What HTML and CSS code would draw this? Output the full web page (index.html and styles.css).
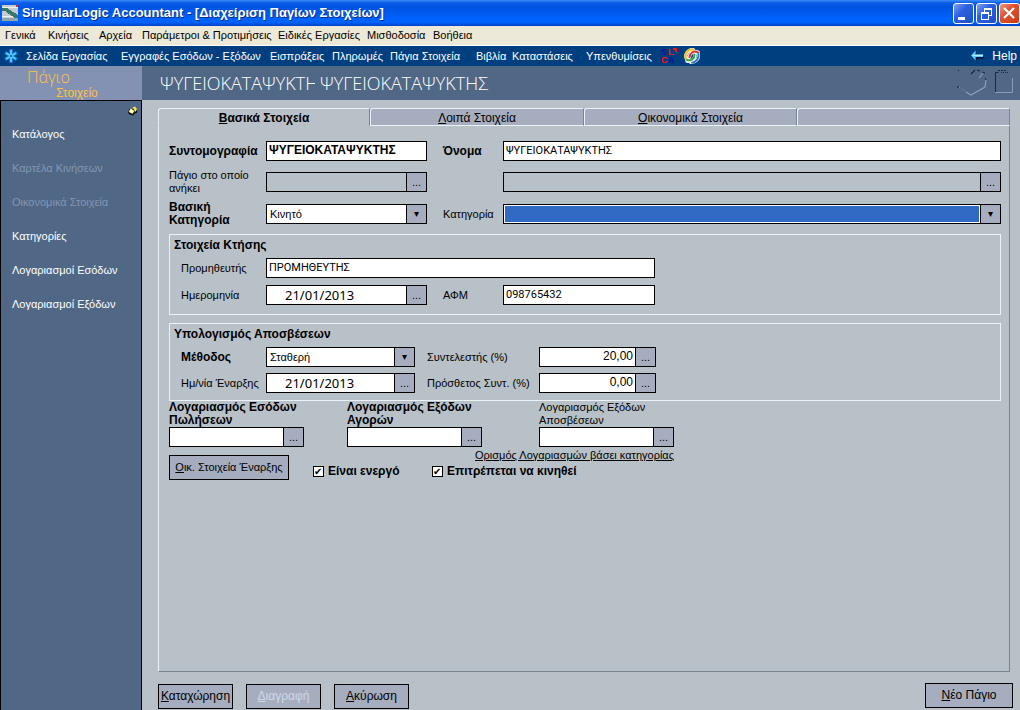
FILE: index.html
```html
<!DOCTYPE html>
<html lang="el">
<head>
<meta charset="utf-8">
<title>SingularLogic Accountant</title>
<link rel="stylesheet" href="styles.css">
</head>
<body>
<header class="titlebar">
  <svg class="app-icon" viewBox="0 0 16 16" shape-rendering="crispEdges">
    <rect width="16" height="16" fill="#c4ccd0"/>
    <path d="M0 3H5L16 10V15H15L3 6H0z" fill="#38776d"/>
    <path d="M0 2.500H16M0 11.500H11" stroke="#eef0f2"/><path d="M0 14H16" stroke="#90a4ac" stroke-width="3"/>
    <rect x="14" y="0" width="2" height="2" fill="#e03020"/>
  </svg>
  <h1 class="app-title">SingularLogic Accountant - [Διαχείριση Παγίων Στοιχείων]</h1>
  <div class="window-buttons">
    <button class="win" type="button" aria-label="Ελαχιστοποίηση"><svg viewBox="0 0 19 19"><path d="M4 14.500h7" stroke="#fff" stroke-width="3"/></svg></button>
    <button class="win" type="button" aria-label="Επαναφορά"><svg viewBox="0 0 19 19" shape-rendering="crispEdges" fill="#fff"><path d="M7 4h8v8h-3v-1h2V6H8v2H7zM4 8h8v8H4zM5 10v5h6v-5z" fill-rule="evenodd"/></svg></button>
    <button class="win close" type="button" aria-label="Κλείσιμο"><svg viewBox="0 0 19 19"><path d="M4 4l10 10M14 4L4 14" stroke="#fff" stroke-width="2.200"/></svg></button>
  </div>
</header>
<nav class="menubar">
  <a href="#">Γενικά</a><a href="#">Κινήσεις</a><a href="#">Αρχεία</a><a href="#">Παράμετροι &amp; Προτιμήσεις</a><a href="#">Ειδικές Εργασίες</a><a href="#">Μισθοδοσία</a><a href="#">Βοήθεια</a>
</nav>
<nav class="toolbar">
  <svg class="star" viewBox="0 0 16 16"><path d="M8 1v14M2 4.500l12 7M14 4.500l-12 7" stroke="#0c78d8" stroke-width="3.600"/><path d="M8 2v12M3 5l10 6M13 5L3 11" stroke="#58c8ff" stroke-width="2"/><circle cx="8" cy="8" r="1" fill="#003c78"/></svg>
  <div class="toolbar-links">
    <a href="#">Σελίδα Εργασίας</a><a href="#">Εγγραφές Εσόδων - Εξόδων</a><a href="#">Εισπράξεις</a><a href="#">Πληρωμές</a><a href="#">Πάγια Στοιχεία</a><a href="#">Βιβλία</a><a href="#">Καταστάσεις</a><a href="#">Υπενθυμίσεις</a>
  </div>
  <svg class="tool-icon slca" viewBox="0 0 16 16">
    <text x="0" y="7" fill="#1010a0">S<tspan x="7" fill="#ff1010">L</tspan></text>
    <text x="0" y="15" fill="#ff1010">C<tspan x="7" fill="#1010a0">A</tspan></text>
    <path d="M12 0h4v4h-1L12 1z" fill="#ff1010"/>
  </svg>
  <svg class="tool-icon swirl" viewBox="0 0 16 16" fill="none" stroke-linecap="round">
    <path d="M9 1.500C3 2 0 7 3 12M14 4C9 2 6 5 5 10M14.500 6C15 11 12 14 7 14.500M3 13c5 1 8-2 8-7" stroke="#f4f8ff" stroke-width="3.400"/>
    <path d="M9 1.300C3 1.500 0 7 2.500 11" stroke="#f4c400" stroke-width="2"/>
    <path d="M14 4.300C9 2 6.500 5 5.500 9" stroke="#e03028" stroke-width="2"/>
    <path d="M14.500 6C15 11 12 14 8 14.700" stroke="#2878c8" stroke-width="2"/>
    <path d="M3 12c5 1.500 7.500-2 7.500-5.500" stroke="#38a838" stroke-width="2"/>
  </svg>
  <a class="help" href="#"><svg viewBox="0 0 16 12"><path d="M7 2v3h8v4H7v3L1 6.500z" fill="#001838"/><path d="M6 0v4h8v3H6v4L1 5.500z" fill="#58c8ff"/><path d="M3 5.500h11" stroke="#c8f0ff"/></svg>Help</a>
</nav>
<div class="heading">
  <div class="section-name"><span class="section-main">Πάγιο</span><span class="section-sub">Στοιχείο</span></div>
  <h2 class="record-name"><span class="record-code">ΨΥΓΕΙΟΚΑΤΑΨΥΚΤΗΣ</span><span>ΨΥΓΕΙΟΚΑΤΑΨΥΚΤΗΣ</span></h2>
  <svg class="heading-icons" viewBox="0 0 58 28" fill="none">
    <path d="M14 5l4-4M1 17v2M20 1l3 1M25 3l3 1" stroke="#14284c" stroke-width="1.200"/>
    <path d="M1 1.500h1M28 9l1 2" stroke="#14284c"/><path d="M26 4l-4 5M29 11l-1 7-14 8-5-3" stroke="#8c9cb8" stroke-width="1.200"/><path d="M8 22l-6-4" stroke="#8c9cb8" stroke-dasharray="1 2"/>
    <path d="M38.500 23V3.500h3" stroke="#14284c"/><path d="M41 1.500h8" stroke="#14284c" stroke-dasharray="2 1"/><path d="M44 3.500h8" stroke="#14284c" stroke-dasharray="1 1"/>
    <path d="M38 23.500h17.500V9" stroke="#8c9cb8"/>
  </svg>
</div>
<div class="workspace">
  <aside class="sidebar">
    <svg class="pin" viewBox="0 0 12 12"><path d="M1 8l2-5 3 1 2-3 3 3v4L8 9l-1 2-4-1z" fill="#111"/><path d="M2 7l2-4 4 3-2 3z" fill="#ffffb8"/><path d="M6 2l3-1 2 3-2 3z" fill="#f0e050"/></svg>
    <a href="#">Κατάλογος</a>
    <a class="off" aria-disabled="true">Καρτέλα Κινήσεων</a>
    <a class="off" aria-disabled="true">Οικονομικά Στοιχεία</a>
    <a href="#">Κατηγορίες</a>
    <a href="#">Λογαριασμοί Εσόδων</a>
    <a href="#">Λογαριασμοί Εξόδων</a>
  </aside>
  <main class="content">
    <div class="tabs" role="tablist">
      <button class="tab active" type="button" role="tab" aria-selected="true"><u>Β</u>ασικά Στοιχεία</button>
      <button class="tab" type="button" role="tab"><u>Λ</u>οιπά Στοιχεία</button>
      <button class="tab" type="button" role="tab"><u>Ο</u>ικονομικά Στοιχεία</button>
      <div class="tab-rest"></div>
    </div>
    <form class="panel">
      <div class="general">
        <label class="strong" for="abbr">Συντομογραφία</label>
        <input class="box strong" id="abbr" value="ΨΥΓΕΙΟΚΑΤΑΨΥΚΤΗΣ">
        <label class="second strong" for="name">Όνομα</label>
        <input class="box" id="name" value="ΨΥΓΕΙΟΚΑΤΑΨΥΚΤΗΣ">

        <label for="parent">Πάγιο στο οποίο<br>ανήκει</label>
        <div class="box combo readonly"><input id="parent" readonly><button class="more" type="button">...</button></div>
        <div class="box combo readonly parent-name"><input aria-label="Όνομα παγίου" readonly><button class="more" type="button">...</button></div>

        <label class="strong" for="base">Βασική<br>Κατηγορία</label>
        <div class="box combo drop"><select id="base"><option>Κινητό</option></select></div>
        <label class="second" for="category">Κατηγορία</label>
        <div class="box combo drop focused"><select id="category"><option></option></select></div>
      </div>

      <fieldset class="group">
        <legend>Στοιχεία Κτήσης</legend>
        <div class="acquisition">
          <label for="supplier">Προμηθευτής</label>
          <input class="box supplier" id="supplier" value="ΠΡΟΜΗΘΕΥΤΗΣ">
          <label for="bought">Ημερομηνία</label>
          <div class="box combo"><input class="date" id="bought" value="21/01/2013"><button class="more" type="button">...</button></div>
          <label class="second" for="afm">ΑΦΜ</label>
          <input class="box" id="afm" value="098765432">
        </div>
      </fieldset>

      <fieldset class="group">
        <legend>Υπολογισμός Αποσβέσεων</legend>
        <div class="depreciation">
          <label class="strong" for="method">Μέθοδος</label>
          <div class="box combo drop"><select id="method"><option>Σταθερή</option></select></div>
          <label class="third" for="rate">Συντελεστής (%)</label>
          <div class="box combo"><input class="number" id="rate" value="20,00"><button class="more" type="button">...</button></div>
          <label for="start">Ημ/νία Έναρξης</label>
          <div class="box combo"><input class="date" id="start" value="21/01/2013"><button class="more" type="button">...</button></div>
          <label class="third" for="extra">Πρόσθετος Συντ. (%)</label>
          <div class="box combo"><input class="number" id="extra" value="0,00"><button class="more" type="button">...</button></div>
        </div>
      </fieldset>

      <div class="accounts">
        <div class="account"><label class="strong" for="acc1">Λογαριασμός Εσόδων<br>Πωλήσεων</label>
          <div class="box combo"><input id="acc1"><button class="more" type="button">...</button></div></div>
        <div class="account"><label class="strong" for="acc2">Λογαριασμός Εξόδων<br>Αγορών</label>
          <div class="box combo"><input id="acc2"><button class="more" type="button">...</button></div></div>
        <div class="account"><label for="acc3">Λογαριασμός Εξόδων<br>Αποσβέσεων</label>
          <div class="box combo"><input id="acc3"><button class="more" type="button">...</button></div></div>
      </div>
      <div class="options">
        <button class="action opening" type="button"><u>Ο</u>ικ. Στοιχεία Έναρξης</button>
        <a class="define" href="#">Ορισμός Λογαριασμών βάσει κατηγορίας</a>
        <label class="check strong"><input type="checkbox" checked>Είναι ενεργό</label>
        <label class="check strong"><input type="checkbox" checked>Επιτρέπεται να κινηθεί</label>
      </div>
    </form>
    <footer class="actions">
      <button class="action" type="submit"><u>Κ</u>αταχώρηση</button>
      <button class="action" type="button" disabled><u>Δ</u>ιαγραφή</button>
      <button class="action" type="button"><u>Α</u>κύρωση</button>
      <button class="action new" type="button"><u>Ν</u>έο Πάγιο</button>
    </footer>
  </main>
</div>
</body>
</html>
```
FILE: styles.css
```css
* { box-sizing: border-box; }
body {
  margin: 0;
  min-height: 100vh;
  display: flex;
  flex-direction: column;
  background: #b8c0c8;
  color: #000;
  font: 11px/13px "Liberation Sans", Arial, sans-serif;
}
a { color: inherit; text-decoration: none; }
input, select, button { font: inherit; color: inherit; margin: 0; border-radius: 0; }
.strong, legend { font-size: 12px; font-weight: bold; }

.titlebar {
  display: flex;
  align-items: center;
  height: 26px;
  padding-left: 2px;
  background: linear-gradient(#3c8cf8 0, #0c5ce8 3px, #0054e4 8px, #0060fc 18px, #0064ff 22px, #0044c8 26px);
}
.app-icon { width: 16px; height: 16px; margin-right: 4px; }
.app-title { flex: 1; margin: 0; color: #fff; font-size: 13px; line-height: 20px; text-shadow: 1px 1px #082c88; white-space: nowrap; }
.window-buttons { display: flex; gap: 2px; }
.win { width: 21px; height: 21px; padding: 0; border: 1px solid #fff; border-radius: 3px; background: linear-gradient(135deg, #7ca4f8, #2c60e0 40%, #1c50c8); }
.win svg { display: block; width: 19px; height: 19px; }
.win.close { background: linear-gradient(135deg, #f09c80, #e05030 40%, #c83c18); }

.menubar {
  display: grid;
  grid-template-columns: 43px 51px 43px 136px 89px 66px 1fr;
  align-items: center;
  height: 20px;
  padding-left: 5px;
  background: #ece9d8;
  border-bottom: 1px solid #fff;
  white-space: nowrap;
}
.toolbar { display: flex; align-items: center; height: 20px; padding: 0 3px; background: #003f7f; color: #fff; white-space: nowrap; }
.star { width: 16px; height: 16px; margin-right: 7px; }
.toolbar-links { display: grid; grid-template-columns: 95px 149px 62px 58px 86px 36px 74px 75px; }
.tool-icon { width: 16px; height: 16px; }
.slca { overflow: visible; font-size: 9px; font-weight: bold; }
.swirl { margin-left: 7px; }
.help { display: flex; align-items: center; gap: 7px; margin-left: auto; font-size: 12px; }
.help svg { width: 15px; height: 12px; }

.heading { display: flex; height: 34px; background: #506886; }
.section-name { display: flex; flex-direction: column; width: 142px; background: #8392b2; color: #ffc040; }
.section-main { padding: 3px 0 0 27px; font: 300 16px/17px "Open Sans", sans-serif; }
.section-sub { padding-left: 56px; font-size: 12px; line-height: 14px; }
.record-name { display: flex; gap: 5px; flex: 1; margin: 0; padding-left: 18px; color: #fff; font: 300 18px/34px "Open Sans", sans-serif; white-space: nowrap; }
.record-code { width: 155px; overflow: hidden; }
.heading-icons { width: 58px; height: 28px; margin: 3px 5px 0 0; }

.workspace { display: flex; flex: 1; }
.sidebar { display: flex; flex-direction: column; gap: 21px; width: 142px; padding: 4px 3px 0 11px; background: #506886; border: 1px solid #000; border-bottom: 0; color: #fff; }
.pin { width: 11px; height: 12px; align-self: flex-end; margin-bottom: -10px; }
.off { color: #8296b4; }

.content { display: flex; flex-direction: column; flex: 1; min-width: 0; padding: 8px 7px 1px 16px; }
.tabs { display: grid; grid-template-columns: 212px 214px 213px 1fr; height: 18px; margin-right: 3px; }
.tab, .tab-rest { padding: 2px 0 0; border: 0 solid #eaf2fa; border-width: 1px 0 1px 1px; border-top-left-radius: 3px; background: #a6adbf; border-right: 1px solid #788490; font-size: 12px; }
.tab.active { border-bottom-color: transparent; background: transparent; font-weight: bold; }
.panel {
  flex: 1;
  margin-right: 3px;
  padding: 15px 8px 0 10px;
  border: 1px solid #788490;
  border-top: 0;
  border-left-color: #eaf2fa;
}

.box { width: 100%; height: 20px; min-width: 0; padding: 0 2px 2px; border: 1px solid #000; background: #fff; outline: 0; }
input.box:not(.strong) { font-family: Roboto, sans-serif; }
.combo { display: flex; padding: 0; }
.combo input, .combo select { flex: 1; min-width: 0; padding: 0 3px; border: 0; background: transparent; outline: 0; appearance: none; }
.combo .date { padding: 0 3px 0 18px; font: 13px/18px "Noto Sans", sans-serif; }
.combo .number { padding: 0 2px 2px; font-size: 12px; text-align: right; }
.more, .drop::after { flex: none; width: 20px; padding: 0; border: 0; border-left: 1px solid #000; background: #a6adbf; }
.drop::after { content: "▾"; width: 19px; font: 10px/18px "DejaVu Sans", sans-serif; text-align: center; }
.readonly { background: #b8c0c8; }
.combo.focused select { margin: 1px; background: #316ac5; }

.general { display: grid; grid-template-columns: 97px 161px 76px 1fr; grid-template-rows: 20px 26px 22px; row-gap: 8px; align-items: center; }
.second { padding-left: 16px; }
.third { padding-left: 12px; }
.parent-name { grid-column: 4; }

.group { margin: 9px 0 0; padding: 4px 4px 9px; border: 1px solid #eaf2fa; min-width: 0; }
.group + .group { margin-top: 8px; padding-bottom: 7px; }
.group legend { float: left; width: 100%; padding: 0; }
.acquisition, .depreciation { clear: both; display: grid; align-items: center; padding: 6px 0 0 7px; row-gap: 7px; white-space: nowrap; }
.acquisition { grid-template-columns: 85px 161px 76px 152px; }
.depreciation { grid-template-columns: 85px 149px 124px 117px; row-gap: 6px; }
.supplier { grid-column: 2 / 5; }

.accounts { display: grid; grid-template-columns: 178px 192px 135px; }
.account { display: grid; width: 135px; white-space: nowrap; }
.options { display: grid; grid-template-columns: 144px 119px 242px; grid-template-rows: 16px 17px; white-space: nowrap; }
.opening { grid-row: 1 / 3; align-self: end; justify-self: start; }
.define { grid-column: 2 / 4; justify-self: end; align-self: center; text-decoration: underline; }
.check { display: flex; align-items: center; gap: 4px; }
.check input { appearance: none; width: 11px; height: 11px; border: 1px solid #000; background: #fff; }
.check input:checked::after { content: "✔"; display: block; font: 10px/9px "DejaVu Sans", sans-serif; }

.action { height: 25px; padding: 0; border: 1px solid #000; background: #a6adbf; white-space: nowrap; }
.action:disabled { color: #d0d8e8; }
.opening { width: 120px; }
.actions { display: flex; gap: 13px; padding-top: 12px; }
.actions .action { width: 75px; font-size: 12px; }
.actions .new { width: 88px; margin: -1px 0 1px auto; }
```
